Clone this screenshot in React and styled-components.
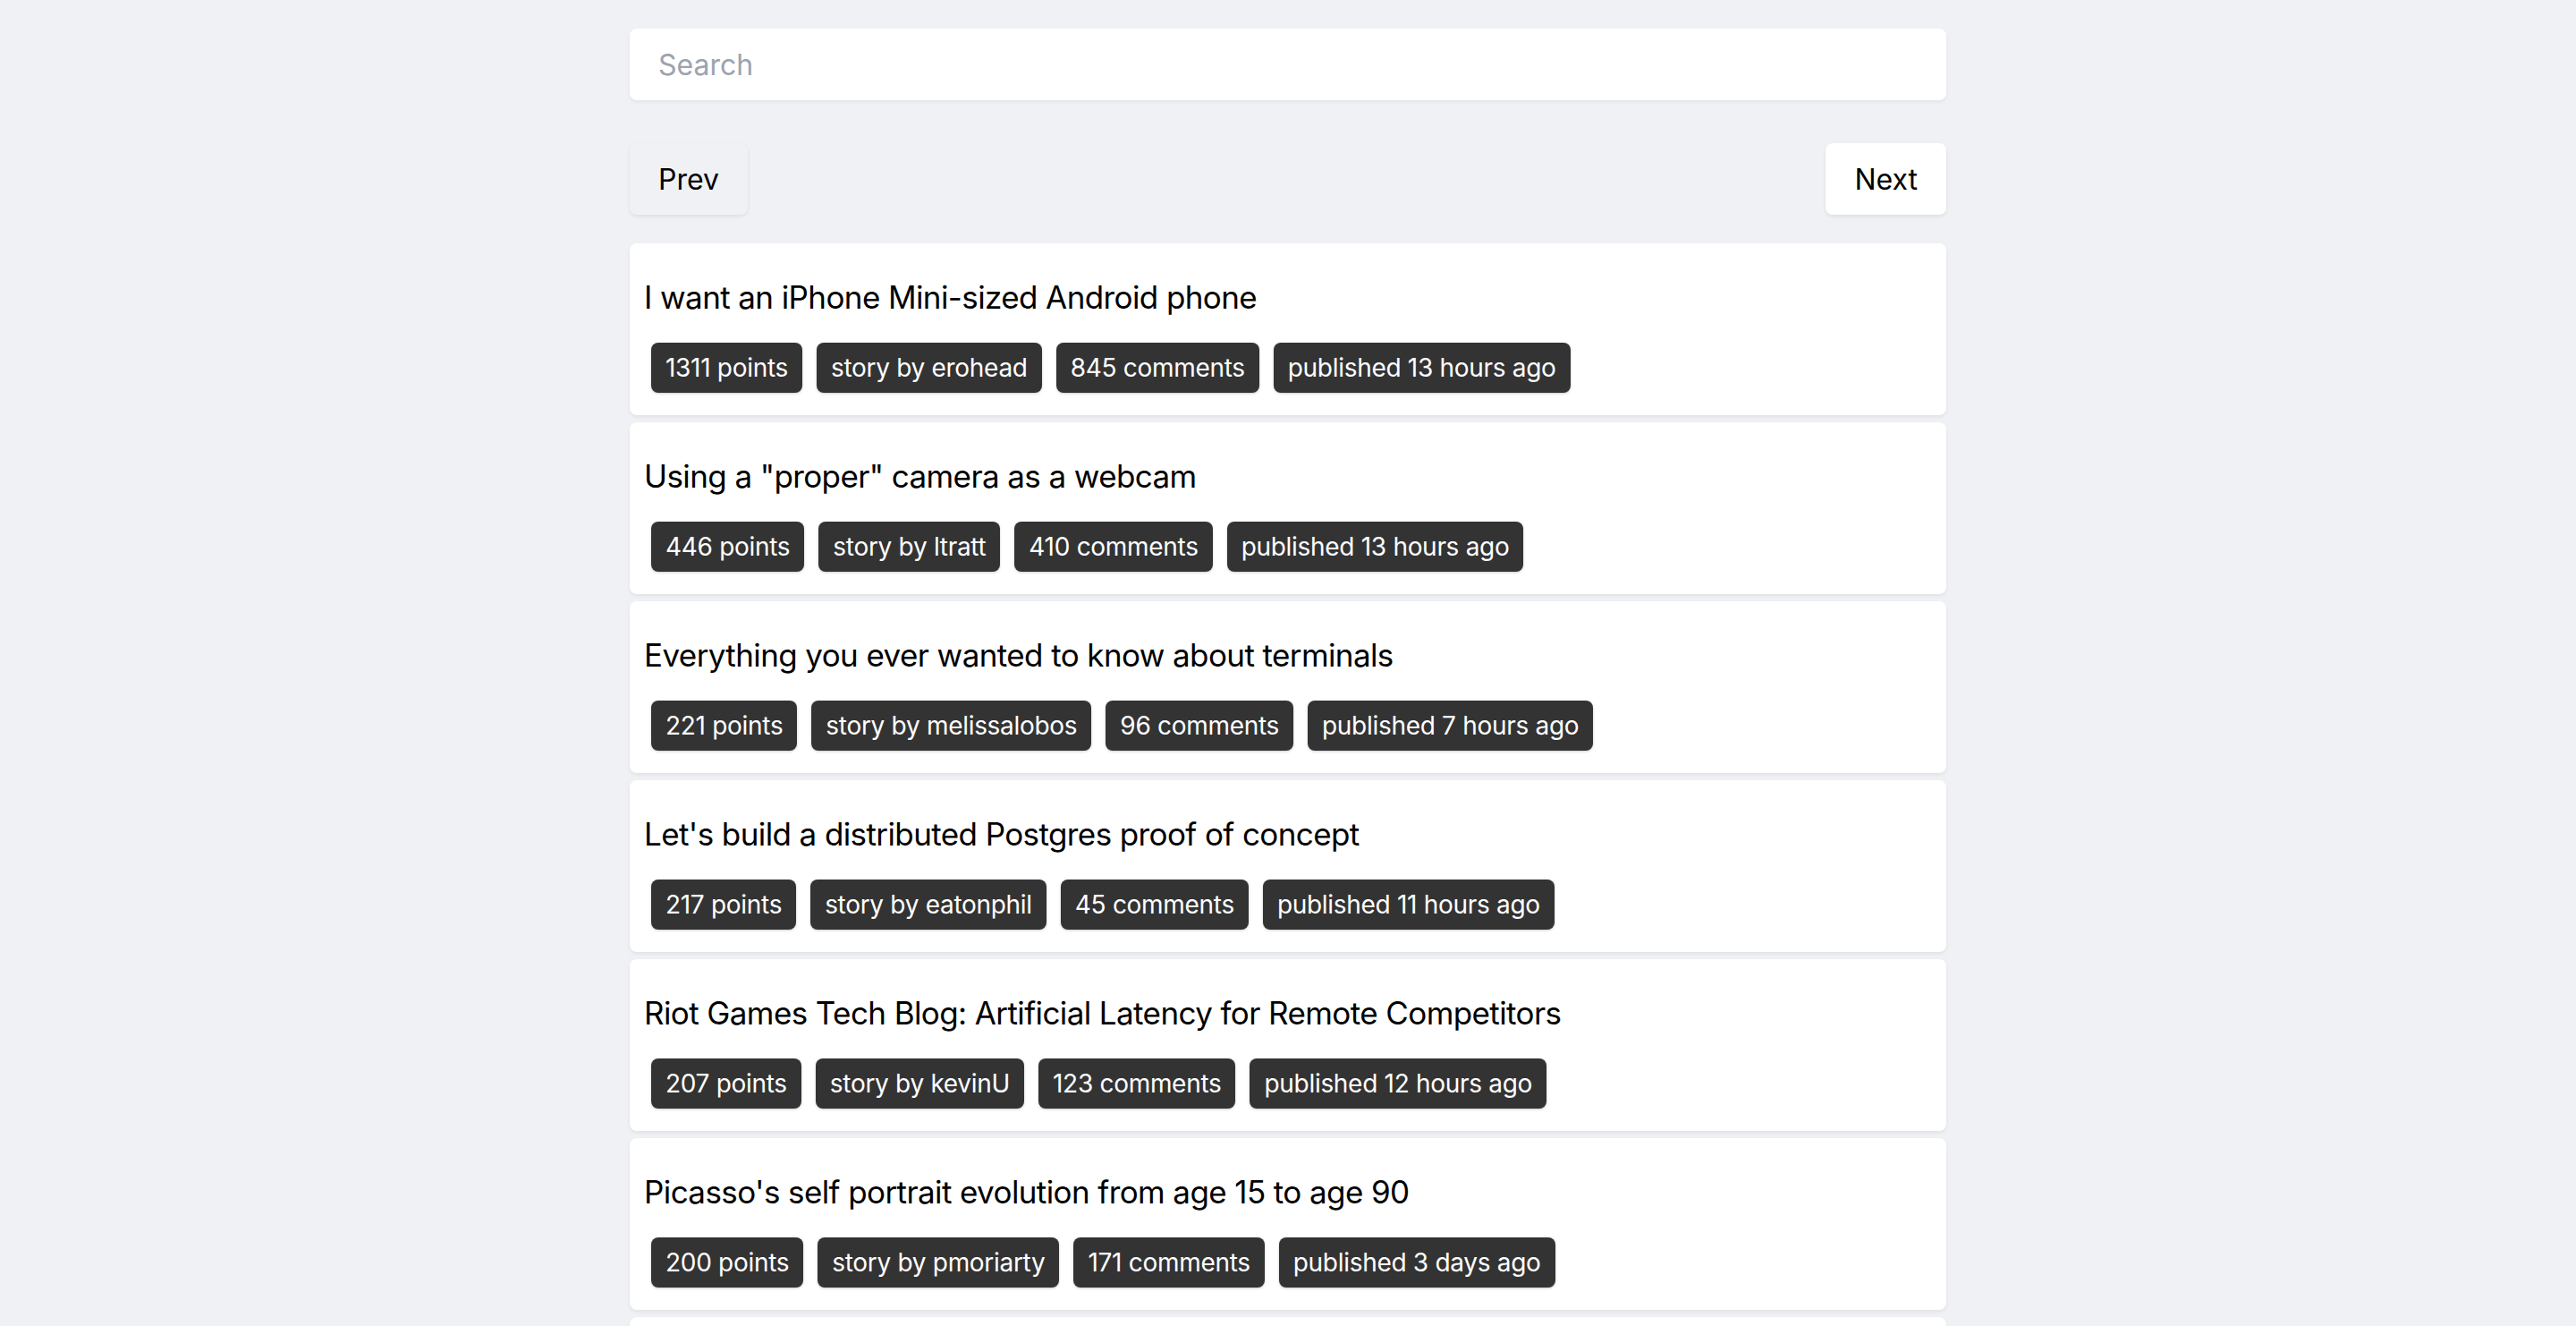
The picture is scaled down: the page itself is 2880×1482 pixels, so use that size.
import React, { useState } from "react";
import styled, { createGlobalStyle } from "styled-components";

const GlobalStyle = createGlobalStyle`
  html, body {
    margin: 0;
    padding: 0;
    background: #f0f1f5;
    font-family: Inter, "Noto Sans", sans-serif;
    color: #000;
  }
`;

const stories = [
  {
    title: "I want an iPhone Mini-sized Android phone",
    points: 1311,
    author: "erohead",
    comments: 845,
    published: "13 hours ago",
  },
  {
    title: 'Using a "proper" camera as a webcam',
    points: 446,
    author: "ltratt",
    comments: 410,
    published: "13 hours ago",
  },
  {
    title: "Everything you ever wanted to know about terminals",
    points: 221,
    author: "melissalobos",
    comments: 96,
    published: "7 hours ago",
  },
  {
    title: "Let's build a distributed Postgres proof of concept",
    points: 217,
    author: "eatonphil",
    comments: 45,
    published: "11 hours ago",
  },
  {
    title: "Riot Games Tech Blog: Artificial Latency for Remote Competitors",
    points: 207,
    author: "kevinU",
    comments: 123,
    published: "12 hours ago",
  },
  {
    title: "Picasso's self portrait evolution from age 15 to age 90",
    points: 200,
    author: "pmoriarty",
    comments: 171,
    published: "3 days ago",
  },
  {
    title: "Show HN: A tiny static site generator",
    points: 188,
    author: "jdoe",
    comments: 64,
    published: "9 hours ago",
  },
];

const Page = styled.main`
  width: 1472px;
  margin: 0 auto;
  padding-top: 32px;
`;

const SearchInput = styled.input`
  display: block;
  width: 100%;
  box-sizing: border-box;
  height: 80px;
  padding: 0 32px;
  border: none;
  border-radius: 8px;
  background: #fff;
  font-family: inherit;
  font-size: 32px;
  color: #111;
  box-shadow: 0 2px 4px rgba(0, 0, 0, 0.06);
  outline: none;

  &::placeholder {
    color: #9ca3af;
  }
`;

const Pager = styled.div`
  display: flex;
  justify-content: space-between;
  margin: 48px 0 32px;
`;

const PageButton = styled.button`
  height: 80px;
  padding: 0 32px;
  border: none;
  border-radius: 8px;
  background: ${(p) => (p.disabled ? "#f0f1f5" : "#fff")};
  color: #000;
  font-family: inherit;
  font-size: 32px;
  box-shadow: 0 2px 4px rgba(0, 0, 0, 0.08);
  cursor: ${(p) => (p.disabled ? "default" : "pointer")};
`;

const List = styled.div`
  display: flex;
  flex-direction: column;
  gap: 8px;
`;

const Card = styled.article`
  box-sizing: border-box;
  height: 192px;
  padding: 0 16px;
  background: #fff;
  border-radius: 8px;
  box-shadow: 0 2px 4px rgba(0, 0, 0, 0.07);
  display: flex;
  flex-direction: column;
`;

const Title = styled.h2`
  margin: 0;
  padding-top: 38px;
  font-size: 35px;
  font-weight: 400;
  letter-spacing: -0.6px;
  line-height: 44px;
`;

const Tags = styled.div`
  display: flex;
  gap: 16px;
  margin-top: 29px;
  padding-left: 8px;
`;

const Tag = styled.span`
  height: 56px;
  padding: 0 16px;
  border-radius: 8px;
  background: #333;
  color: #fff;
  font-size: 28px;
  letter-spacing: -0.3px;
  line-height: 56px;
  box-shadow: 0 1px 3px rgba(0, 0, 0, 0.2);
  white-space: nowrap;
`;

const App = () => {
  const [query, setQuery] = useState("");

  return (
    <>
      <GlobalStyle />
      <Page>
        <SearchInput
          placeholder="Search"
          value={query}
          onChange={(e) => setQuery(e.target.value)}
        />

        <Pager>
          <PageButton disabled>Prev</PageButton>
          <PageButton>Next</PageButton>
        </Pager>

        <List>
          {stories.map((s) => (
            <Card key={s.title}>
              <Title>{s.title}</Title>
              <Tags>
                <Tag>{s.points} points</Tag>
                <Tag>story by {s.author}</Tag>
                <Tag>{s.comments} comments</Tag>
                <Tag>published {s.published}</Tag>
              </Tags>
            </Card>
          ))}
        </List>
      </Page>
    </>
  );
};

export default App;
